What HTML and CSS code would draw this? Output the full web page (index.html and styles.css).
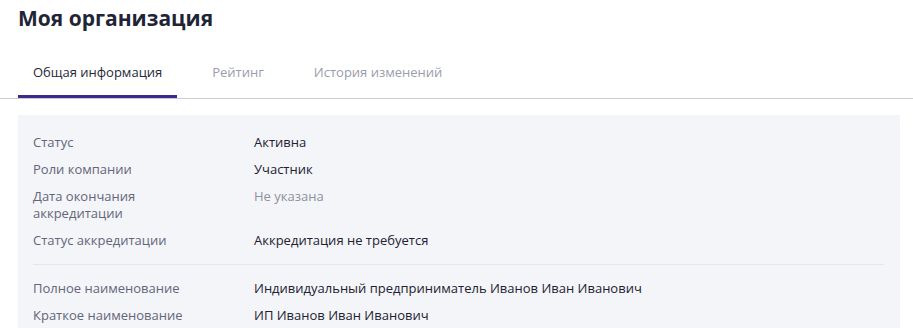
FILE: index.html
```html
<!DOCTYPE html>
<html lang="ru">
<head>
<meta charset="utf-8">
<link rel="stylesheet" href="styles.css">
</head>
<body>
<div class="page">
  <h1 class="title">Моя организация</h1>
  <nav class="tabs">
    <div class="tab active">Общая информация</div>
    <div class="tab">Рейтинг</div>
    <div class="tab">История изменений</div>
  </nav>
  <section class="panel">
    <div class="group">
      <div class="row"><div class="label">Статус</div><div class="value">Активна</div></div>
      <div class="row"><div class="label">Роли компании</div><div class="value">Участник</div></div>
      <div class="row"><div class="label">Дата окончания<br>аккредитации</div><div class="value muted">Не указана</div></div>
      <div class="row"><div class="label">Статус аккредитации</div><div class="value">Аккредитация не требуется</div></div>
    </div>
    <div class="divider"></div>
    <div class="group">
      <div class="row"><div class="label">Полное наименование</div><div class="value">Индивидуальный предприниматель Иванов Иван Иванович</div></div>
      <div class="row"><div class="label">Краткое наименование</div><div class="value">ИП Иванов Иван Иванович</div></div>
    </div>
  </section>
</div>
</body>
</html>
```

FILE: styles.css
```css
* { box-sizing: border-box; }
html, body { margin: 0; padding: 0; background: #ffffff; }
body { font-family: "Open Sans", "Noto Sans", sans-serif; color: #1e2131; }
.page { display: flex; flex-direction: column; }
.title {
  margin: 0;
  padding: 3px 0 0 18px;
  font-size: 21px;
  line-height: 30px;
  font-weight: 700;
  color: #1f2536;
}
.tabs {
  display: flex;
  gap: 20px;
  margin-top: 25px;
  padding-left: 18px;
  border-bottom: 1px solid #c9cbd3;
}
.tab {
  padding: 4px 15px 0;
  height: 40px;
  line-height: 20px;
  font-size: 13px;
  color: #9a9dab;
  border-bottom: 3px solid transparent;
}
.tab.active { color: #262838; border-bottom-color: #40288f; }
.panel {
  margin: 16px 13px 0 18px;
  padding: 19px 16px 20px 15px;
  background: #f4f5f9;
  display: flex;
  flex-direction: column;
}
.group { display: flex; flex-direction: column; gap: 10px; }
.row { display: flex; font-size: 13px; line-height: 17px; }
.label { width: 221px; flex: none; color: #63667a; }
.value { color: #1e2131; }
.value.muted { color: #8d91a0; }
.divider { height: 1px; background: #e4e6ec; margin: 15px 0 15px; }
```
